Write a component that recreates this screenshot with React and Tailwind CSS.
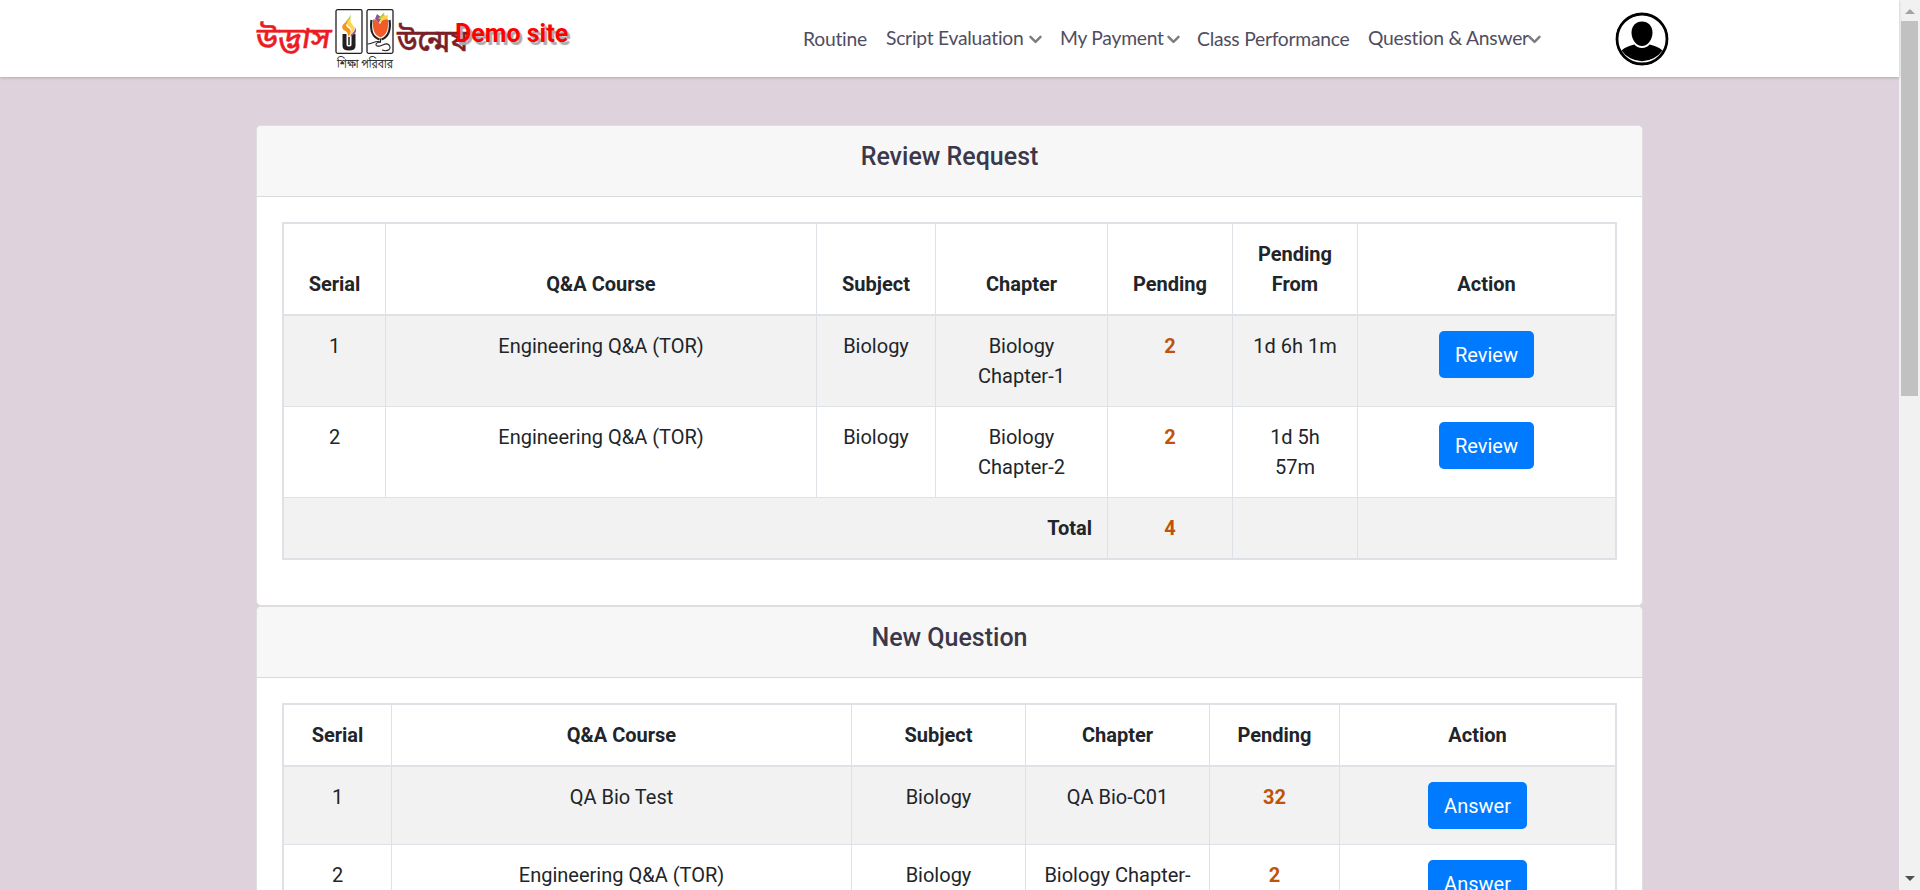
const cellBase = "border-[#dee2e6] p-[15px] text-center";

function Chevron({ className = "" }) {
  return (
    <svg viewBox="0 0 13 9" className={"h-[9px] w-[13px] fill-none stroke-[#7d7d7d] stroke-[2.4] " + className}>
      <path d="M1.500 1.800 L6.500 6.900 L11.500 1.800" strokeLinecap="round" strokeLinejoin="round" />
    </svg>
  );
}

function Logo() {
  return (
    <svg viewBox="0 0 214 64" className="h-16 w-[214px] shrink-0 overflow-visible" fontFamily="'Noto Sans Bengali','Noto Sans',sans-serif">
      <text x="5" y="43" transform="skewX(-9)" fontSize="29" fontWeight="500" fill="#ed1c24" stroke="#ed1c24" strokeWidth="0.4" textLength="75" lengthAdjust="spacingAndGlyphs">উদ্ভাস</text>
      <g fill="#fff" stroke="#231f20" strokeWidth="1.300">
        <rect x="80" y="4.700" width="26" height="43.600" rx="1.500" />
        <rect x="111" y="4.700" width="26" height="43.600" rx="1.500" />
      </g>
      <g transform="translate(0 1)">
        <path d="M86.500 28h4v11q0 1.500 2.500 1.500t2.500 -1.500v-11h4v12q0 4.500 -6.500 4.500t-6.500 -4.500z" fill="#231f20" />
        <path d="M93 31 V39" stroke="#231f20" strokeWidth="1.500" fill="none" />
        <path d="M94 7.500 C95 12 89 14 89.500 18 C92 18 96 13 94 7.500" fill="#a6ce39" />
        <path d="M90 16 C85 19 85 23 89.500 25 C92 27 92 28 92.500 31 C96 26 95 24 92.500 22 C89 20 90 18.500 92 15z" fill="#f7941d" />
        <path d="M94.500 12 C89 17 91 19.500 94.500 22 C96.500 24 95 27 93.500 29.500 C101 25 98 20 96 18 Q94 16 94.500 12" fill="#ffd54a" />
        <path d="M98.500 20.500 C100 25 97 26 94 30.500 C101 28 101 24 98.500 20.500" fill="#8e4fa8" />
        <path d="M119 13 L121 8 L126 12 L123 17z" fill="#8e4fa8" />
        <path d="M122 13 L128 6.500 L129 13z" fill="#a6ce39" />
        <path d="M123 16 L126 10.500 L132 9 L131 16z" fill="#fdd04a" />
        <path d="M117 13.500 C121 13 122 16 124 18 C126 14 128 13 132 13.500 C132 20 133 28 124.500 31.500 C116 28 117 20 117 13.500z" fill="#f15a29" />
        <path d="M115.500 14 C114 25 116 31 123.500 33.500 M133.500 14 C135 25 132 31 125.500 33.500" fill="none" stroke="#231f20" strokeWidth="2.200" />
        <path d="M124.500 32.500 V36 C120 34 116 38 111.500 38 M124.500 36 C118 37 119 41 124 40 C128 39 130 36 133 39 C136 43 132 46 126 44" fill="none" stroke="#231f20" strokeWidth="1.100" />
      </g>
      <text x="141" y="46" fontSize="30" fontWeight="500" fill="#7a1f28" stroke="#7a1f28" strokeWidth="0.4" textLength="71" lengthAdjust="spacingAndGlyphs">উন্মেষ</text>
      <text x="81" y="62.500" fontSize="13" fill="#333" textLength="56" lengthAdjust="spacingAndGlyphs">শিক্ষা পরিবার</text>
    </svg>
  );
}

function Avatar() {
  return (
    <svg viewBox="0 0 54 54" className="size-[54px] rounded-full">
      <circle cx="27" cy="27" r="25" fill="#fff" stroke="#000" strokeWidth="2.8" />
      <path d="M6.500 38.500 Q12 34 19.500 32.600 Q22 36 27 36 Q32 36 34.500 32.600 Q42 34 47.500 38.500 A25 25 0 0 1 6.500 38.500z" />
      <path d="M27 9.500 C33 9.500 37.500 14 37.500 20.500 C37.500 28 32.500 34 27 34 C21.500 34 16.500 28 16.500 20.500 C16.500 14 21 9.500 27 9.500z" />
    </svg>
  );
}

function Header() {
  return (
    <header className="relative z-10 flex h-[77px] bg-white pl-64 shadow-[0_1px_3px_rgba(0,0,0,0.2)]">
      <div className="flex w-[547px] shrink-0 pt-[5px]">
        <Logo />
        <span className="mt-3.5 -ml-[15px] font-[Roboto] text-[25px] leading-[30px] font-bold whitespace-nowrap text-[#ff0000] [text-shadow:2.5px_2.5px_1px_#aaa]">
          Demo site
        </span>
      </div>
      <nav className="flex w-[812px] shrink-0 items-start pt-[23px] font-[Lato] text-[19.3px] leading-[30px] tracking-[-0.25px] whitespace-nowrap text-[#504d61]">
        <a className="mt-px w-[83px]">Routine</a>
        <a className="flex w-[174px] items-center">Script Evaluation<Chevron className="mt-0.5 ml-[5px]" /></a>
        <a className="flex w-[137px] items-center">My Payment<Chevron className="mt-0.5 ml-[3px]" /></a>
        <a className="mt-px w-[171px]">Class Performance</a>
        <a className="flex items-center">Question &amp; Answer<Chevron className="mt-0.5 -ml-px" /></a>
      </nav>
      <div className="pt-3">
        <Avatar />
      </div>
    </header>
  );
}

function Card({ title, children }) {
  return (
    <section className="rounded-[5px] border border-[#dfdddf] bg-white">
      <h5 className="h-[71px] rounded-t-[4px] border-b border-[#d8d9da] bg-[#f7f7f7] pt-4 text-center text-[25px] leading-[30px] font-medium text-[#3b384a]">
        {title}
      </h5>
      <div className="px-[25px] pt-[25px] pb-[45px]">{children}</div>
    </section>
  );
}

function DataTable({ widths, heads, rows, action, total }) {
  return (
    <table className="w-[1335px] table-fixed border-separate border-spacing-0 border-2 border-[#dee2e6]">
      <colgroup>
        {widths.map((w, i) => <col key={i} style={{ width: w }} />)}
      </colgroup>
      <thead>
        <tr>
          {heads.map((h) => (
            <th key={h} className={cellBase + " border-r border-b-2 align-bottom font-bold last:border-r-0"}>{h}</th>
          ))}
        </tr>
      </thead>
      <tbody>
        {rows.map((r, i) => (
          <tr key={i} className="align-top odd:bg-[#f2f2f2]">
            {r.map((c, j) => (
              <td key={j} className={cellBase + " border-r border-b " + (j === 4 ? "font-bold text-[#bf530c]" : "")}>{c}</td>
            ))}
            <td className={cellBase + " border-b"}>
              <button className="mx-auto block h-[47px] rounded-[5px] bg-[#007bff] px-4 leading-[30px] text-white">{action}</button>
            </td>
          </tr>
        ))}
        {total && (
          <tr className="bg-[#f2f2f2] font-bold">
            <td colSpan={4} className="border-r border-[#dee2e6] p-[15px] text-right">Total</td>
            <td className={cellBase + " border-r text-[#bf530c]"}>{total}</td>
            <td className={cellBase + " border-r"} />
            <td className={cellBase} />
          </tr>
        )}
      </tbody>
    </table>
  );
}

function Scrollbar() {
  return (
    <div className="flex w-[21px] shrink-0 flex-col items-center bg-[#f1f1f1]">
      <svg viewBox="0 0 10 5" className="mt-[9px] h-[5px] w-2.5 fill-[#a3a3a3]"><path d="M0 5 L5 0 L10 5z" /></svg>
      <div className="mt-[7px] h-[375px] w-[17px] bg-[#c1c1c1]" />
      <svg viewBox="0 0 10 5" className="mt-auto mb-[9px] h-[5px] w-2.5 fill-[#505050]"><path d="M0 0 L5 5 L10 0z" /></svg>
    </div>
  );
}

export default function App() {
  return (
    <div className="flex h-[890px] w-[1920px] overflow-hidden bg-[#ded3dc]">
      <div className="w-[1899px] shrink-0">
        <Header />
        <main className="mt-12 ml-64 w-[1387px] font-[Roboto] text-[20px] leading-[30px] text-[#212529]">
          <Card title="Review Request">
            <DataTable
              widths={[102, 431, 119, 172, 125, 125, 257]}
              heads={["Serial", "Q&A Course", "Subject", "Chapter", "Pending", "Pending From", "Action"]}
              rows={[
                ["1", "Engineering Q&A (TOR)", "Biology", "Biology Chapter-1", "2", "1d 6h 1m"],
                ["2", "Engineering Q&A (TOR)", "Biology", "Biology Chapter-2", "2", "1d 5h 57m"],
              ]}
              action="Review"
              total="4"
            />
          </Card>
          <Card title="New Question">
            <DataTable
              widths={[108, 460, 174, 184, 130, 275]}
              heads={["Serial", "Q&A Course", "Subject", "Chapter", "Pending", "Action"]}
              rows={[
                ["1", "QA Bio Test", "Biology", "QA Bio-C01", "32"],
                ["2", "Engineering Q&A (TOR)", "Biology", "Biology Chapter-1", "2"],
              ]}
              action="Answer"
            />
          </Card>
        </main>
      </div>
      <Scrollbar />
    </div>
  );
}
